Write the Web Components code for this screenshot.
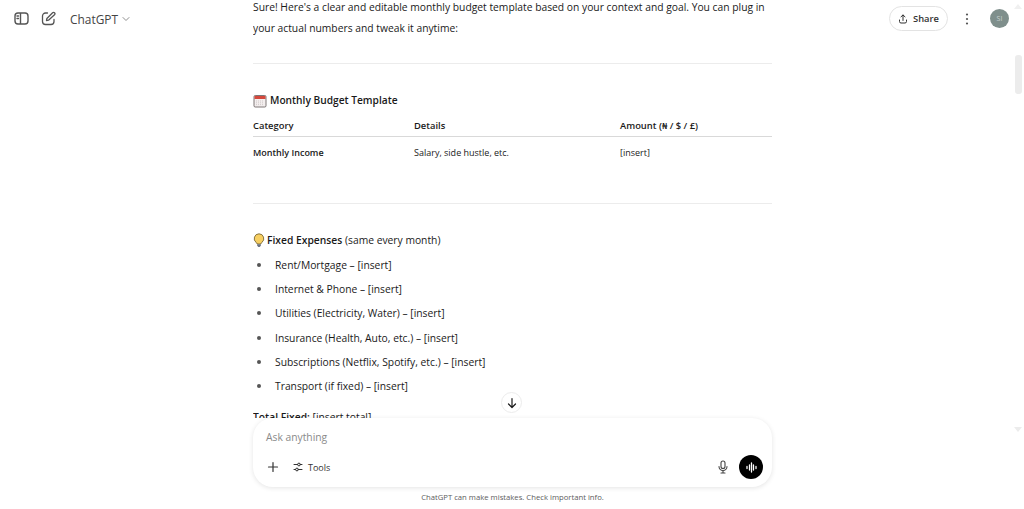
<!DOCTYPE html>
<html lang="en">
<head>
<meta charset="utf-8">
<title>ChatGPT</title>
<style>
html, body { margin: 0; height: 100%; background: #fff; overflow: hidden; }
body { font-family: "Open Sans", "Noto Sans", sans-serif; color: #1a1a1a; }
</style>
</head>
<body>
<chat-app>
  <chat-header slot="header"></chat-header>
  <chat-thread slot="thread">
    <p class="intro">Sure! Here's a clear and editable monthly budget template based on your context and goal. You can plug in your actual numbers and tweak it anytime:</p>
  </chat-thread>
  <chat-composer slot="composer"></chat-composer>
</chat-app>

<script>
class ChatApp extends HTMLElement {
    constructor() {
        super();
        const shadow = this.attachShadow({ mode: 'open' });
        shadow.innerHTML = `
            <style>
            :host { display: block; position: relative; width: 1024px; height: 509px; overflow: hidden; }
            .column { width: 519px; margin-left: 253px; height: 509px; display: flex; flex-direction: column; }
            .thread { flex: 1; min-height: 0; overflow: hidden; }
            .foot { box-sizing: border-box; height: 22px; display: flex; align-items: center; justify-content: center; font-size: 7.700px; color: #5d5d5d; padding-bottom: 2px; }
            .header { position: absolute; top: 0; left: 0; right: 0; }
            .bar { position: absolute; top: 0; right: 0; width: 18px; height: 436px; }
            .thumb { position: absolute; left: 9px; top: 55px; width: 6.500px; height: 39px; border-radius: 3px; background: #ececec; }
            .up, .down { position: absolute; left: 8px; width: 0; height: 0; border-left: 4px solid transparent; border-right: 4px solid transparent; }
            .up { top: 4px; border-bottom: 5px solid #f0f0f0; }
            .down { top: 427px; border-top: 5px solid #ececec; }
            .jump { position: absolute; left: 501px; top: 392px; width: 21px; height: 21px; box-sizing: border-box; border: 1px solid #ececec; border-radius: 50%; background: #fff; display: flex; align-items: center; justify-content: center; }
            </style>
            <div class="column">
                <div class="thread"><slot name="thread"></slot></div>
                <slot name="composer"></slot>
                <div class="foot">ChatGPT can make mistakes. Check important info.</div>
            </div>
            <div class="header"><slot name="header"></slot></div>
            <div class="bar"><div class="up"></div><div class="thumb"></div><div class="down"></div></div>
            <div class="jump"><svg width="12" height="12" viewBox="0 0 12 12" fill="none" stroke="#1a1a1a" stroke-width="1.200" stroke-linecap="round" stroke-linejoin="round"><path d="M6 1.500v9M2.500 7 6 10.500 9.500 7"/></svg></div>
        `;
    }
}
customElements.define("chat-app", ChatApp);

class ChatHeader extends HTMLElement {
    constructor() {
        super();
        const shadow = this.attachShadow({ mode: 'open' });
        shadow.innerHTML = `
            <style>
            :host { display: flex; align-items: center; height: 37px; padding: 0 15px 0 14px; justify-content: space-between; }
            .side { display: flex; align-items: center; }
            svg { display: block; }
            .model { font-size: 11.900px; color: #444; margin-left: 14px; display: flex; align-items: center; gap: 4px; }
            .share { display: flex; align-items: center; gap: 5px; box-sizing: border-box; width: 59px; height: 25px; justify-content: center; border: 1px solid #e3e3e3; border-radius: 13px; font-size: 9.400px; font-weight: 600; color: #333; margin-right: 13px; }
            .avatar { width: 19px; height: 19px; border-radius: 50%; background: #7f8f8c; color: #c9d2d0; font-size: 7px; display: flex; align-items: center; justify-content: center; margin-left: 17px; }
            </style>
            <div class="side">
                <svg width="15" height="15" viewBox="0 0 15 15" fill="none" stroke="#555" stroke-width="1.400"><rect x="1" y="2" width="13" height="11" rx="3"/><path d="M6.500 2v11"/><path d="M3 5h1.500M3 7.500h1.500" stroke-linecap="round"/></svg>
                <svg style="margin-left:12px" width="15" height="15" viewBox="0 0 15 15" fill="none" stroke="#555" stroke-width="1.300" stroke-linecap="round" stroke-linejoin="round"><path d="M6.500 2H4.500a3 3 0 0 0-3 3v5.500a3 3 0 0 0 3 3H10a3 3 0 0 0 3-3V8.500"/><path d="M5.500 9.500l.4-2L11.600 1.800a1.300 1.300 0 0 1 1.900 1.900L7.500 9.200z"/></svg>
                <div class="model">ChatGPT <svg width="8" height="8" viewBox="0 0 8 8" fill="none" stroke="#8f8f8f" stroke-width="1" stroke-linecap="round" stroke-linejoin="round"><path d="M1 2.500 4 5.500 7 2.500"/></svg></div>
            </div>
            <div class="side">
                <div class="share"><svg width="10" height="10" viewBox="0 0 10 10" fill="none" stroke="#333" stroke-width="1" stroke-linecap="round" stroke-linejoin="round"><path d="M5 6.500V1M3 2.800 5 1l2 1.800M1.500 6v1.500A1.500 1.500 0 0 0 3 9h4a1.500 1.500 0 0 0 1.500-1.500V6"/></svg>Share</div>
                <svg width="12" height="14" viewBox="0 0 12 14" fill="#555"><circle cx="6" cy="2.500" r="1.100"/><circle cx="6" cy="7" r="1.100"/><circle cx="6" cy="11.500" r="1.100"/></svg>
                <div class="avatar">SI</div>
            </div>
        `;
    }
}
customElements.define("chat-header", ChatHeader);

class ChatThread extends HTMLElement {
    constructor() {
        super();
        const shadow = this.attachShadow({ mode: 'open' });
        shadow.innerHTML = `
            <style>
            :host { display: block; font-size: 10.300px; line-height: 21px; color: #1a1a1a; }
            ::slotted(p) { margin: -3px 0 0; }
            hr { border: 0; border-top: 1px solid #ececec; margin: 0; }
            b { font-weight: 600; }
            .rule1 { margin-top: 24px; }
            h3 { margin: 26px 0 0; font-size: 10.200px; line-height: 21px; font-weight: 600; display: flex; align-items: center; gap: 3px; }
            .table { display: grid; grid-template-columns: 161px 206px 1fr; font-size: 9px; margin-top: 4px; }
            .table .th { height: 21px; font-size: 9.400px; font-weight: 600; line-height: 21px; border-bottom: 1px solid #d9d9d9; }
            .table .td { padding-top: 5px; line-height: 21px; }
            .rule2 { margin-top: 40px; }
            .fixed { margin-top: 26px; display: flex; align-items: center; gap: 2px; }
            ul { list-style: none; padding: 0; margin: 2px 0 0; }
            li { display: flex; height: 24.200px; line-height: 24.200px; padding-left: 22px; position: relative; }
            li::before { content: ""; position: absolute; left: 4px; top: 10px; width: 4px; height: 4px; border-radius: 50%; background: #555; }
            .total { margin-top: 9px; }
            svg { display: block; flex: none; }
            </style>
            <slot></slot>
            <hr class="rule1">
            <h3><svg width="14" height="14" viewBox="0 0 14 14"><rect x="1" y="1.500" width="12" height="11.500" rx="1.200" fill="#f3eeee" stroke="#6f6666" stroke-width=".9"/><path d="M1.500 2.500a.6.6 0 0 1 .6-.6h9.800a.6.6 0 0 1 .6.6V5H1.500z" fill="#d5483c"/><path d="M3 7h8M3 8.800h8M3 10.600h8" stroke="#c4bcbc" stroke-width=".7" stroke-dasharray="1 1"/></svg>Monthly Budget Template</h3>
            <div class="table">
                <div class="th">Category</div><div class="th">Details</div><div class="th">Amount (₦ / $ / £)</div>
                <div class="td"><b>Monthly Income</b></div><div class="td">Salary, side hustle, etc.</div><div class="td">[insert]</div>
            </div>
            <hr class="rule2">
            <div class="fixed"><svg width="12" height="15" viewBox="0 0 12 15"><path d="M6 .8a4.800 4.800 0 0 0-2.900 8.600c.6.500.9 1 .9 1.600h4c0-.6.300-1.100.9-1.600A4.800 4.800 0 0 0 6 .8z" fill="#f7cf62" stroke="#6b5a2c" stroke-width=".8"/><path d="M4.200 11.300h3.600v1.500l-1.100 1.200H5.300l-1.100-1.200z" fill="#6b7280"/></svg><span><b>Fixed Expenses</b> (same every month)</span></div>
            <ul>
                <li>Rent/Mortgage – [insert]</li>
                <li>Internet &amp; Phone – [insert]</li>
                <li>Utilities (Electricity, Water) – [insert]</li>
                <li>Insurance (Health, Auto, etc.) – [insert]</li>
                <li>Subscriptions (Netflix, Spotify, etc.) – [insert]</li>
                <li>Transport (if fixed) – [insert]</li>
            </ul>
            <div class="total"><b>Total Fixed:</b> [insert total]</div>
        `;
    }
}
customElements.define("chat-thread", ChatThread);

class ChatComposer extends HTMLElement {
    constructor() {
        super();
        const shadow = this.attachShadow({ mode: 'open' });
        shadow.innerHTML = `
            <style>
            :host { display: flex; flex-direction: column; justify-content: space-between; box-sizing: border-box; height: 69px; background: #fff; border-radius: 20px; box-shadow: 0 1px 5px rgba(0,0,0,.11); padding: 9px 9px 8px 13px; }
            .ask { font-size: 10.300px; color: #8a8a8a; line-height: 20px; }
            .row { display: flex; align-items: center; height: 24px; }
            svg { display: block; flex: none; }
            .tools { font-size: 9px; color: #333; margin-left: 4px; }
            .grow { flex: 1; }
            .voice { width: 24px; height: 24px; border-radius: 50%; background: #000; display: flex; align-items: center; justify-content: center; margin-left: 10px; }
            </style>
            <div class="ask">Ask anything</div>
            <div class="row">
                <svg width="14" height="14" viewBox="0 0 14 14" fill="none" stroke="#333" stroke-width="1.200" stroke-linecap="round"><path d="M7 2.500v9M2.500 7h9"/></svg>
                <svg style="margin-left:12px" width="12" height="12" viewBox="0 0 12 12" fill="none" stroke="#333" stroke-width="1" stroke-linecap="round"><path d="M2 3.500H5.500M8.500 3.500H10M2 8.500H3.500M6.500 8.500H10"/><circle cx="7" cy="3.500" r="1.400"/><circle cx="5" cy="8.500" r="1.400"/></svg>
                <span class="tools">Tools</span>
                <span class="grow"></span>
                <svg width="12" height="14" viewBox="0 0 12 14" fill="none" stroke="#444" stroke-width="1.100" stroke-linecap="round"><rect x="4" y="1" width="4" height="7.500" rx="2"/><path d="M2 6.500a4 4 0 0 0 8 0M6 10.500V13M4 13h4"/></svg>
                <div class="voice"><svg width="13" height="11" viewBox="0 0 13 11" fill="none" stroke="#fff" stroke-width="1.300" stroke-linecap="round"><path d="M2 4.500v2M4.500 3v5M6.500 1v9M8.500 3v5M11 4.500v2"/></svg></div>
            </div>
        `;
    }
}
customElements.define("chat-composer", ChatComposer);
</script>
</body>
</html>
